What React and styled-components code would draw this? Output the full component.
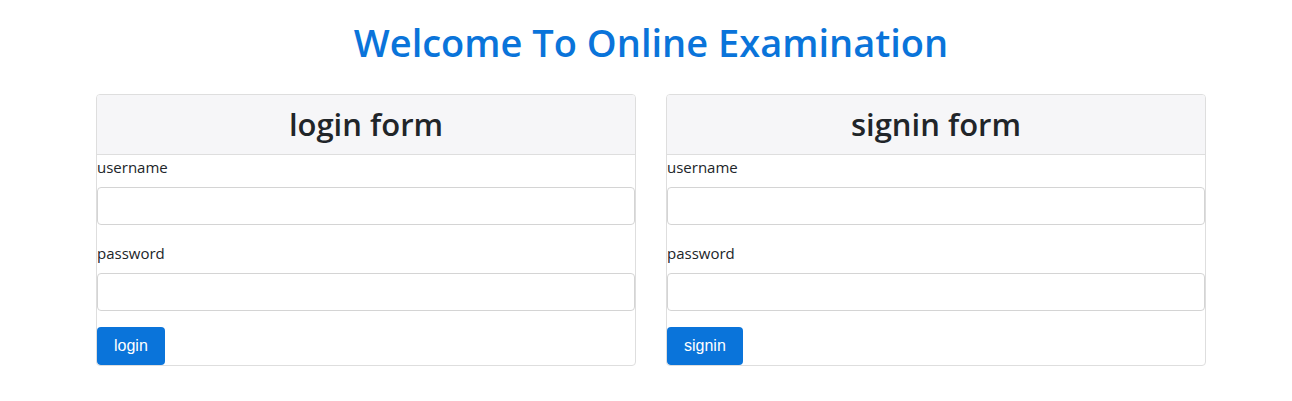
import React from 'react';
import styled, { createGlobalStyle } from 'styled-components';

const GlobalStyle = createGlobalStyle`
  * { box-sizing: border-box; }
  body {
    margin: 0;
    background: #fff;
    color: #212529;
    font-family: "Open Sans", "Noto Sans", sans-serif;
    font-size: 16px;
    line-height: 1.5;
  }
`;

const Page = styled.div`
  padding-left: 10px;
`;

const Title = styled.h1`
  margin: 0;
  padding-top: 16px;
  height: 94px;
  text-align: center;
  color: #0a74da;
  font-size: 38px;
  font-weight: 600;
  line-height: 52px;
`;

const Row = styled.div`
  display: flex;
  justify-content: center;
  gap: 30px;
`;

const Card = styled.div`
  width: 540px;
  border: 1px solid #dedede;
  border-radius: 4px;
  overflow: hidden;
`;

const CardHeader = styled.div`
  height: 60px;
  background: #f6f6f8;
  border-bottom: 1px solid #dedede;
  display: flex;
  align-items: center;
  justify-content: center;
`;

const CardTitle = styled.h2`
  margin: 0;
  font-size: 31px;
  font-weight: 600;
  color: #212529;
`;

const Field = styled.div`
  margin-bottom: 16px;
`;

const Label = styled.label`
  display: block;
  margin-bottom: 8px;
  font-size: 15px;
  line-height: 24px;
  color: #212529;
`;

const Input = styled.input`
  display: block;
  width: 100%;
  height: 38px;
  border: 1px solid #d4d4d4;
  border-radius: 4px;
  padding: 6px 12px;
  font: inherit;
`;

const Button = styled.button`
  height: 38px;
  padding: 0 ${p => p.$pad}px;
  border: none;
  border-radius: 4px;
  background: #0a74da;
  color: #fff;
  font-family: "Liberation Sans", Arial, sans-serif;
  font-size: 16px;
  display: block;
`;

const forms = [
  { title: 'login form', action: 'login', pad: 17 },
  { title: 'signin form', action: 'signin', pad: 17 },
];

export default function App() {
  return (
    <>
      <GlobalStyle />
      <Page>
        <Title>Welcome To Online Examination</Title>
        <Row>
          {forms.map(f => (
            <Card key={f.title}>
              <CardHeader>
                <CardTitle>{f.title}</CardTitle>
              </CardHeader>
              <Field>
                <Label>username</Label>
                <Input type="text" />
              </Field>
              <Field>
                <Label>password</Label>
                <Input type="password" />
              </Field>
              <Button $pad={f.pad}>{f.action}</Button>
            </Card>
          ))}
        </Row>
      </Page>
    </>
  );
}
